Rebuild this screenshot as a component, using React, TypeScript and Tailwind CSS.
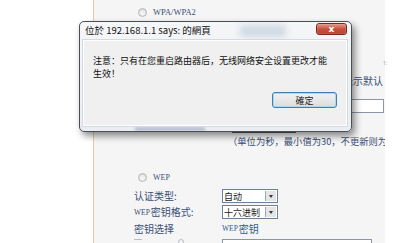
import React from "react";

const cjk = { fontFamily: '"Noto Sans CJK SC", "Noto Sans", sans-serif' };
const cjkTC = { fontFamily: '"Noto Sans CJK TC", "Noto Sans", sans-serif' };
const serif = { fontFamily: '"Liberation Serif", "DejaVu Serif", serif' };

function Radio() {
  return (
    <span className="inline-block w-[9px] h-[9px] rounded-full border border-[#b8b8b8] bg-gradient-to-b from-[#e6e6e6] to-[#fafafa] shadow-[inset_0_0_1px_#999]" />
  );
}

function Select({ label, w }: { label: string; w: number }) {
  return (
    <div
      className="flex items-stretch h-[14px] border border-[#6d7f99] bg-white"
      style={{ width: w }}
    >
      <div className="flex-1 flex items-center pl-[1px] text-[9px] leading-none text-[#222] whitespace-nowrap" style={cjk}>
        {label}
      </div>
      <div className="w-[11px] shrink-0 flex items-center justify-center bg-[#e4e4e4] border-l border-[#9aa8bb] m-[1px]">
        <span className="block w-0 h-0 border-l-[2.5px] border-r-[2.5px] border-t-[3px] border-l-transparent border-r-transparent border-t-[#333]" />
      </div>
    </div>
  );
}

export default function App() {
  return (
    <div className="relative w-[400px] h-[243px] overflow-hidden bg-white flex">
      {/* left white column */}
      <div className="w-[93px] shrink-0 bg-white" />
      {/* main page */}
      <div className="w-[292px] shrink-0 bg-[#f5f5f5] border-l border-[#ecc7a4] flex flex-col text-[#3a4f74]">
        <div className="flex items-center gap-[6px] pl-[44px] mt-[8px] h-[10px]">
          <Radio />
          <span className="text-[8.5px] leading-none" style={serif}>WPA/WPA2</span>
        </div>
        <div className="flex justify-end mt-[59px] pr-[2px] h-[12px] items-center text-[10px] leading-none text-[#3a4f74]" style={cjk}>
          （0表示默认
        </div>
        <div className="flex justify-end mt-[13px] pr-[1px]">
          <div className="w-[60px] h-[14px] border border-[#8a97a8] bg-white" />
        </div>
        <div className="pl-[134px] mt-[24px] text-[9.3px] leading-none whitespace-nowrap" style={cjk}>
          （单位为秒，最小值为30，不更新则为
        </div>
        <div className="flex items-center gap-[6px] pl-[44px] mt-[27px] h-[10px]">
          <Radio />
          <span className="text-[8px] leading-none" style={serif}>WEP</span>
        </div>
        <div className="grid grid-cols-[88px_1fr] pl-[40px] mt-[6px] text-[10px] leading-none whitespace-nowrap" style={cjk}>
          <div className="h-[16px] flex items-center">认证类型:</div>
          <div className="h-[16px] flex items-center">
            <Select label="自动" w={56} />
          </div>
          <div className="h-[16px] flex items-center">
            <span className="text-[7.5px] mr-[1px]" style={serif}>WEP</span>密钥格式:
          </div>
          <div className="h-[16px] flex items-center">
            <Select label="十六进制" w={56} />
          </div>
          <div className="h-[17px] flex items-center">密钥选择</div>
          <div className="h-[17px] flex items-center text-[#2f5a94]">
            <span className="text-[7.5px] mr-[1px]" style={serif}>WEP</span>密钥
          </div>
          <div className="h-[12px] flex items-start pt-[2px] text-[#9aa6ba]">
            <span className="w-[8px] h-[6px] border-t border-[#b5bfcc] mr-[36px]" />
            <span className="w-[6px] h-[6px] rounded-full border border-[#b5bfcc]" />
          </div>
          <div className="h-[12px] flex items-start pt-[2px]">
            <div className="w-[150px] h-[10px] border border-[#8a97a8] bg-white" />
          </div>
        </div>
      </div>
      <div className="flex-1 bg-white relative">
        <span className="absolute left-[-2px] top-[60px] text-[5px] text-[#999]">1:</span>
      </div>

      {/* behind-glass blurred bits */}
      <div className="absolute left-[232px] top-[130px] w-[64px] h-[3px] bg-[#555] blur-[0.5px]" />

      {/* dialog */}
      <div className="absolute left-[79px] top-[21px] w-[273px] h-[111px] rounded-[5px] border border-[#4a4f57] bg-gradient-to-b from-[#f4f6f8] to-[#eaedf1] shadow-[3px_4px_7px_rgba(0,0,0,0.45)] flex flex-col overflow-hidden">
        <div className="absolute left-[160px] top-[3px] w-[46px] h-[12px] bg-[#c9d3df] blur-[3px] opacity-80" />
        <div className="absolute left-[55px] bottom-[0px] w-[70px] h-[4px] bg-[#aeb8cc] blur-[1.5px] opacity-90" />
        <div className="relative h-[18px] flex items-center pl-[5px] text-[9.5px] leading-none text-[#111]" style={cjkTC}>
          位於 192.168.1.1 says: 的網頁
        </div>
        <div className="absolute right-[4px] top-[1px] w-[31px] h-[12px] rounded-[3px] border border-[#7a2a22] bg-gradient-to-b from-[#e39a8c] via-[#c9523f] to-[#b8412f] flex items-center justify-center shadow-[inset_0_0_1px_#fff]">
          <span className="text-[9px] leading-none text-white font-bold" style={{ fontFamily: '"DejaVu Sans", sans-serif' }}>x</span>
        </div>
        <div className="relative ml-[3px] mr-[4px] mb-[5px] flex-1 border border-white bg-[#f0f0f0] outline outline-1 outline-[#d4dae2] flex flex-col">
          <div className="pl-[9px] pt-[13px] text-[9px] leading-[13px] text-[#111]" style={cjk}>
            <div className="whitespace-nowrap">注意：只有在您重启路由器后，无线网络安全设置更改才能</div>
            <div>生效！</div>
          </div>
          <div className="flex justify-end pr-[9px] mt-[12px]">
            <div className="w-[65px] h-[16px] rounded-[3px] border border-[#3c7fb1] bg-gradient-to-b from-[#f2f2f2] to-[#dcdcdc] shadow-[inset_0_0_0_1px_#a9d8f5] flex items-center justify-center text-[9px] leading-none text-[#222]" style={cjkTC}>
              確定
            </div>
          </div>
        </div>
      </div>
    </div>
  );
}
